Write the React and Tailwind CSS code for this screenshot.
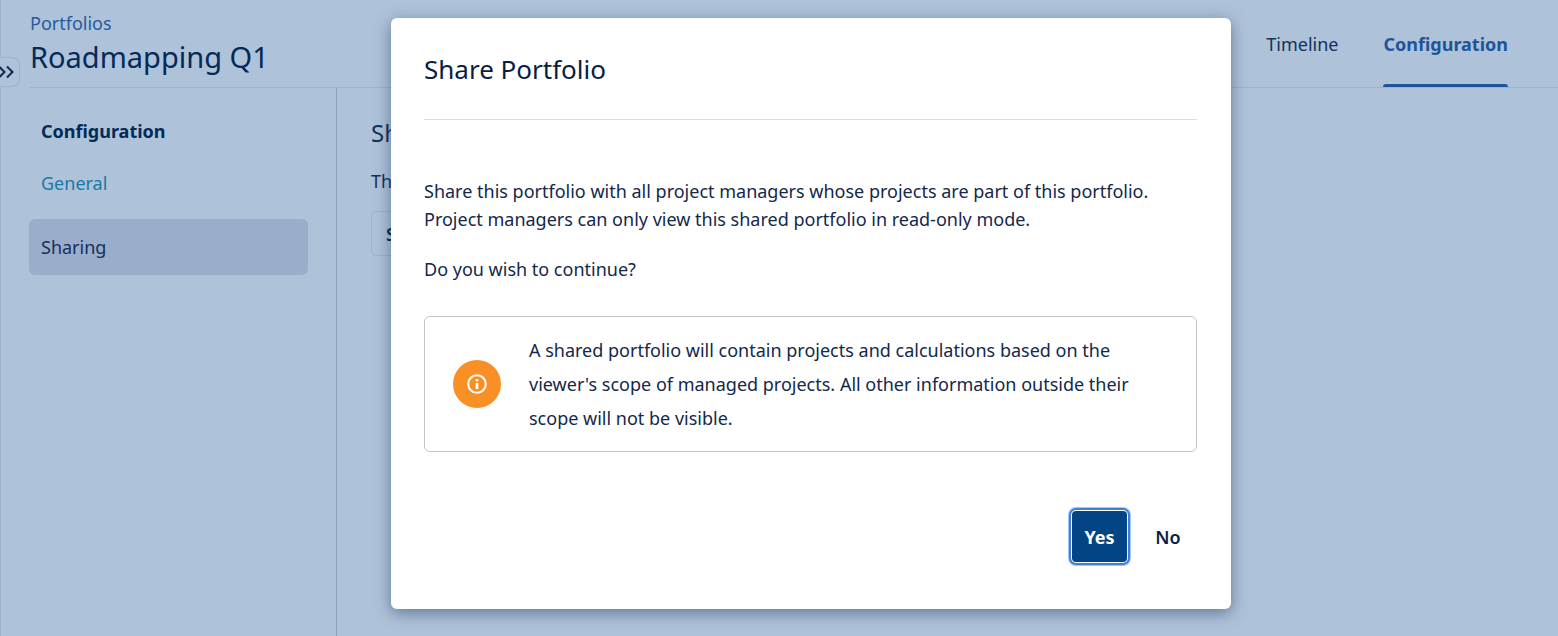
import React from "react";

function ExpandToggle() {
  return (
    <button
      type="button"
      aria-label="Expand navigation"
      className="absolute top-[57px] left-0 flex h-[30px] w-5 items-center rounded-r-lg border border-l-0 border-[#9db2c8] bg-[#aec3d9] text-[#12264a]"
    >
      <svg width="14" height="14" viewBox="0 0 14 14" fill="none" stroke="currentColor" strokeWidth="2">
        <path d="M-1 1.5L4.5 7L-1 12.5M7 1.5L12.5 7L7 12.5" />
      </svg>
    </button>
  );
}

function Header() {
  return (
    <header className="ml-[30px] flex h-22 justify-between border-b border-[#9db3ca] pr-[50px]">
      <div className="pt-[9px]">
        <a href="#portfolios" className="block leading-7 text-[#255c9f]">
          Portfolios
        </a>
        <h1 className="text-[29px] leading-10 text-[#042a57]">Roadmapping Q1</h1>
      </div>
      <nav className="flex gap-[45px]">
        <a href="#timeline" className="flex items-center text-[#14315a]">
          Timeline
        </a>
        <a
          href="#configuration"
          aria-current="page"
          className="relative flex items-center font-bold text-[#1f549b]"
        >
          Configuration
          <span className="absolute inset-x-0 bottom-0 h-[3px] rounded-t-sm bg-[#1f549b]" />
        </a>
      </nav>
    </header>
  );
}

function Sidebar() {
  return (
    <aside className="w-[337px] shrink-0 border-r border-[#8ea5c0] pt-[29px] pr-7 pl-[29px] leading-7">
      <h2 className="pl-3 font-bold text-[#042a57]">Configuration</h2>
      <nav className="mt-2.5 flex flex-col gap-2">
        <a href="#general" className="rounded-md py-3.5 pl-3 text-[#1b78a6]">
          General
        </a>
        <a href="#sharing" aria-current="page" className="rounded-md bg-[#9aadcb] py-3.5 pl-3 text-[#14315a]">
          Sharing
        </a>
      </nav>
    </aside>
  );
}

function ShareDialog() {
  return (
    <div className="absolute inset-0 flex items-start justify-center pt-[18px] pl-16">
      <section
        role="dialog"
        aria-modal="true"
        aria-labelledby="share-title"
        className="w-[840px] rounded-md bg-white pt-[31px] pr-[34px] pb-[47px] pl-[33px] text-[#14284b] shadow-[0_4px_16px_rgba(20,45,85,0.5)]"
      >
        <h2 id="share-title" className="border-b border-[#dddddd] pb-7.5 text-[26px] leading-10 text-[#091e42]">
          Share Portfolio
        </h2>
        <p className="mt-[57px] leading-7">
          Share this portfolio with all project managers whose projects are part of this portfolio. Project
          managers can only view this shared portfolio in read-only mode.
        </p>
        <p className="mt-[22px] leading-7">Do you wish to continue?</p>
        <div className="mt-[33px] flex items-center gap-7 rounded-md border border-[#c4c4c4] py-4 pr-10 pl-7">
          <span className="flex size-12 shrink-0 items-center justify-center rounded-full bg-[#f99026]">
            <svg width="20" height="20" viewBox="0 0 20 20" fill="none" stroke="white" strokeWidth="2">
              <circle cx="10" cy="10" r="8.8" />
              <path d="M10 9V15" strokeWidth="2.6" />
              <path d="M10 5V7.4" strokeWidth="2.6" />
            </svg>
          </span>
          <p className="leading-[34px]">
            A shared portfolio will contain projects and calculations based on the viewer's scope of managed
            projects. All other information outside their scope will not be visible.
          </p>
        </div>
        <div className="mt-[59px] flex justify-end gap-3">
          <button
            type="button"
            className="h-[51px] w-[55px] rounded-sm bg-[#034584] font-bold text-white shadow-[0_0_0_1px_#ffffff,0_0_0_3px_#3f7fdb,0_0_0_4px_#a3c6f5]"
          >
            Yes
          </button>
          <button type="button" className="h-[51px] w-[58px] font-semibold text-[#091e42]">
            No
          </button>
        </div>
      </section>
    </div>
  );
}

export default function App() {
  return (
    <div className="relative flex min-h-screen flex-col bg-[#aec3d9] font-['Noto_Sans',sans-serif] text-lg shadow-[inset_1px_0_0_#9db3ca]">
      <ExpandToggle />
      <Header />
      <div className="flex grow">
        <Sidebar />
        <main className="pt-[29px] pl-[34px] leading-7 text-[#14315a]">
          <h2 className="text-2xl leading-8">Sharing</h2>
          <p className="mt-[18px]">This</p>
          <button
            type="button"
            className="mt-4 h-[45px] rounded-md border border-[#9db2c8] px-3.5 font-semibold text-[#042a57]"
          >
            Set
          </button>
        </main>
      </div>
      <ShareDialog />
    </div>
  );
}
